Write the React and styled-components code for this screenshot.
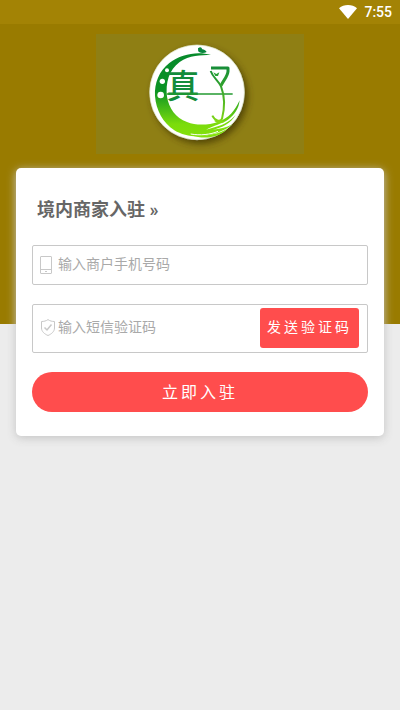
import React, { useState } from 'react';
import styled, { createGlobalStyle, ThemeProvider } from 'styled-components';

//------------------------------------------------------------------------------
// CONSTANTS:
//------------------------------------------------------------------------------
const theme = {
  color: {
    brand: '#997b00',
    statusBar: '#a38305',
    banner: '#8f7f14',
    page: '#ececec',
    white: '#ffffff',
    primary: '#ff4d4d',
    border: '#c8c8c8',
    title: '#666666',
    placeholder: '#a9a9a9',
  },
};
//------------------------------------------------------------------------------
// STYLES:
//------------------------------------------------------------------------------
const GlobalStyle = createGlobalStyle`
  * {
    box-sizing: border-box;
  }
  body {
    margin: 0;
    background: ${theme.color.page};
    font-family: Roboto, "Noto Sans CJK SC", sans-serif;
  }
  button,
  input {
    font-family: inherit;
  }
`;

const Page = styled.div`
  min-height: 100vh;
  background: linear-gradient(
    ${({ theme }) => theme.color.brand} 324px,
    ${({ theme }) => theme.color.page} 324px
  );
`;

const StatusBar = styled.div`
  display: flex;
  align-items: center;
  justify-content: flex-end;
  gap: 7px;
  height: 24px;
  padding: 0 8px;
  background: ${({ theme }) => theme.color.statusBar};
  color: ${({ theme }) => theme.color.white};
  font-size: 14px;
  font-weight: 500;
`;

const Banner = styled.header`
  display: flex;
  justify-content: center;
  padding: 10px 16px 14px;
`;

const LogoPanel = styled.svg`
  display: block;
  width: 208px;
  height: 120px;
  background: ${({ theme }) => theme.color.banner};
`;

const Card = styled.form`
  display: flex;
  flex-direction: column;
  margin: 0 16px;
  padding: 24px 16px;
  border-radius: 5px;
  background: ${({ theme }) => theme.color.white};
  box-shadow: 0 2px 10px #c4c4c4;
`;

const Title = styled.h1`
  margin: 0 0 17px;
  padding: 0 5px;
  color: ${({ theme }) => theme.color.title};
  font-size: 18px;
  font-weight: 700;
  line-height: 36px;
`;

const Field = styled.div`
  display: flex;
  align-items: center;
  height: ${({ $tall }) => ($tall ? 49 : 40)}px;
  margin-bottom: 19px;
  padding: 0 8px ${({ $tall }) => ($tall ? 2 : 0)}px 7px;
  border: 1px solid ${({ theme }) => theme.color.border};
  border-radius: 2px;
`;

const FieldLabel = styled.label`
  display: flex;
  width: 18px;

  svg {
    display: block;
    fill: none;
    stroke: ${({ theme }) => theme.color.border};
  }
`;

const TextInput = styled.input`
  flex: 1;
  min-width: 0;
  height: 36px;
  padding: 0 0 2px;
  border: 0;
  outline: none;
  background: none;
  color: ${({ theme }) => theme.color.title};
  font-size: 14px;

  &::placeholder {
    color: ${({ theme }) => theme.color.placeholder};
    opacity: 1;
  }
`;

const Button = styled.button`
  height: 40px;
  padding: 0 7px 3px;
  border: 0;
  border-radius: ${({ $round }) => ($round ? 20 : 3)}px;
  background: ${({ theme }) => theme.color.primary};
  color: ${({ theme }) => theme.color.white};
  font-size: ${({ $round }) => ($round ? 16 : 14)}px;
  letter-spacing: 3px;
  white-space: nowrap;
  cursor: pointer;
`;
//------------------------------------------------------------------------------
// ICONS:
//------------------------------------------------------------------------------
const WifiIcon = () => (
  <svg width="18" height="14" viewBox="0 0 18 14" aria-hidden="true">
    <path d="M9 14 0 3.2C2.500 1 5.600 0 9 0s6.500 1 9 3.200z" fill="#fff" />
  </svg>
);

const PhoneIcon = () => (
  <svg width="13" height="18" viewBox="0 0 13 18" aria-hidden="true">
    <rect x="0.5" y="0.5" width="11" height="17" rx="0.5" />
    <path d="M0.500 13.500h11M5 15.500h2" />
  </svg>
);

const ShieldIcon = () => (
  <svg width="16" height="17" viewBox="0 0 16 17" aria-hidden="true">
    <path d="M8 0.600C6 2 4 2.500 1.500 2.500v6.500c0 3.500 3 6 6.500 7.500 3.500-1.500 6.500-4 6.500-7.500V2.500C12 2.500 10 2 8 0.600z" />
    <path d="M4.500 8.500 7 11l4.500-5.500" strokeWidth="1.500" />
  </svg>
);

const Logo = () => (
  <LogoPanel viewBox="18 27 624 360" role="img" aria-label="真子">
    <defs>
      <linearGradient id="leaf" gradientUnits="userSpaceOnUse" x1="300" y1="85" x2="300" y2="335">
        <stop offset="0" stopColor="#078a2c" />
        <stop offset="0.45" stopColor="#0a9324" />
        <stop offset="0.85" stopColor="#7bdc0c" />
        <stop offset="1" stopColor="#84e00a" />
      </linearGradient>
      <linearGradient id="stem" gradientUnits="userSpaceOnUse" x1="390" y1="120" x2="390" y2="295">
        <stop offset="0" stopColor="#138b39" />
        <stop offset="0.4" stopColor="#35a52c" />
        <stop offset="1" stopColor="#84d914" />
      </linearGradient>
      <filter id="shade" x="-20%" y="-20%" width="150%" height="150%">
        <feDropShadow dx="9" dy="11" stdDeviation="11" floodColor="#3d3200" floodOpacity="0.75" />
      </filter>
    </defs>
    <circle cx="321" cy="202" r="142" fill="#fff" stroke="#dfe8cf" strokeWidth="2" filter="url(#shade)" />
    <path
      fill="url(#leaf)"
      d="M363 90C322 78 274 87 238 114C207 138 193 174 195 213C198 255 219 294 253 316
        C282 334 325 339 362 329C389 323 413 311 427 298C409 308 388 313 367 314
        C396 309 423 294 437 270C422 287 403 299 376 306L348 314C371 301 396 296 414 284
        C434 270 446 251 449 226C435 258 415 280 386 290C354 301 319 302 291 291
        C257 278 237 250 231 215C226 174 237 134 269 111C298 91 333 90 363 90Z"
    />
    <path d="M304 331C340 336 380 329 412 312C386 337 345 345 304 331Z" fill="#84e00a" />
    <path d="M302 327C330 332 362 329 384 319" fill="none" stroke="#fff" strokeWidth="3" />
    <path d="M324 70C331 65 334 66 337 73C342 74 346 75 350 81C343 84 335 85 327 81C323 79 325 75 324 70Z" fill="#08863d" />
    <text
      x="279"
      y="219"
      textAnchor="middle"
      fill="#128c3b"
      fontFamily="'Noto Sans CJK SC', sans-serif"
      fontSize="100"
      fontWeight="500"
    >
      真
    </text>
    <circle cx="231" cy="136" r="6" fill="#fff" />
    <circle cx="217" cy="169" r="8" fill="#fff" />
    <circle cx="212" cy="210" r="10" fill="#fff" />
    <path d="M231 207H428" stroke="#239a31" strokeWidth="5" />
    <path
      d="M363 129H414V139C413 154 402 163 393 182"
      fill="none"
      stroke="url(#stem)"
      strokeWidth="9"
      strokeLinejoin="round"
    />
    <path d="M362 138C369 158 384 166 393 184C405 215 404 250 396 281C392 292 376 290 367 272" fill="none" stroke="url(#stem)" strokeWidth="6" />
    <path d="M370 142L379 147L388 142L384 153L376 153Z" fill="#27a236" />
    <path d="M372 287C382 285 393 280 403 291C390 297 380 293 372 287Z" fill="#84d914" />
  </LogoPanel>
);
//------------------------------------------------------------------------------
// COMPONENT:
//------------------------------------------------------------------------------
const App = () => {
  const [phone, setPhone] = useState('');
  const [code, setCode] = useState('');

  return (
    <ThemeProvider theme={theme}>
      <GlobalStyle />
      <Page>
        <StatusBar>
          <WifiIcon />
          <span>7:55</span>
        </StatusBar>
        <Banner>
          <Logo />
        </Banner>
        <Card onSubmit={(e) => e.preventDefault()}>
          <Title>境内商家入驻 »</Title>
          <Field>
            <FieldLabel htmlFor="phone" aria-label="手机号码">
              <PhoneIcon />
            </FieldLabel>
            <TextInput
              id="phone"
              type="tel"
              placeholder="输入商户手机号码"
              value={phone}
              onChange={(e) => setPhone(e.target.value)}
            />
          </Field>
          <Field $tall>
            <FieldLabel htmlFor="code" aria-label="短信验证码">
              <ShieldIcon />
            </FieldLabel>
            <TextInput
              id="code"
              type="text"
              placeholder="输入短信验证码"
              value={code}
              onChange={(e) => setCode(e.target.value)}
            />
            <Button type="button">发送验证码</Button>
          </Field>
          <Button type="submit" $round>立即入驻</Button>
        </Card>
      </Page>
    </ThemeProvider>
  );
};

export default App;
